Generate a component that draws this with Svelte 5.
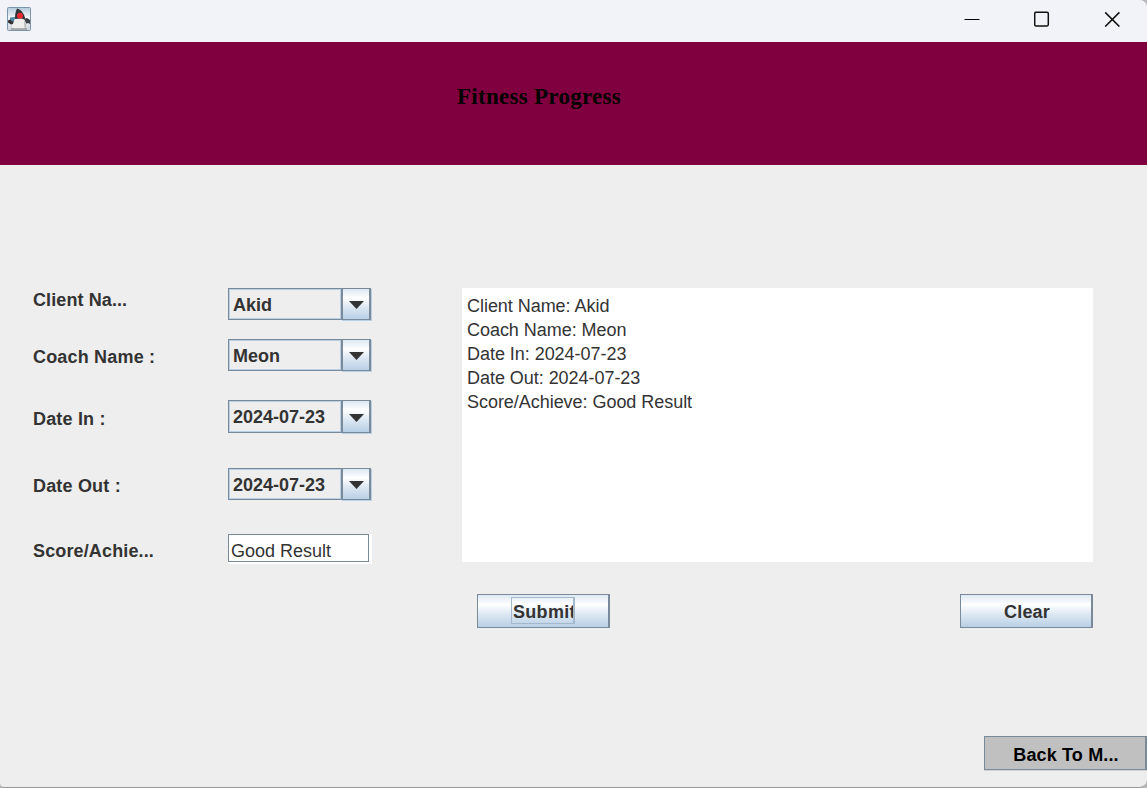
<script>
  const rows = [
    { label: 'Client Na...', value: 'Akid', kind: 'r1' },
    { label: 'Coach Name :', value: 'Meon', kind: 'r2' },
    { label: 'Date In :', value: '2024-07-23', kind: 'r3' },
    { label: 'Date Out :', value: '2024-07-23', kind: 'r4' }
  ];
  const summary = [
    'Client Name: Akid',
    'Coach Name: Meon',
    'Date In: 2024-07-23',
    'Date Out: 2024-07-23',
    'Score/Achieve: Good Result'
  ];
</script>

<div class="window">
  <header class="titlebar">
    <svg class="duke" width="24" height="24" viewBox="0 0 24 24">
      <defs>
        <linearGradient id="tile" x1="0" y1="0" x2="0" y2="1">
          <stop offset="0" stop-color="#b4cbdc" />
          <stop offset=".45" stop-color="#f4f7fa" />
          <stop offset="1" stop-color="#cbd2da" />
        </linearGradient>
      </defs>
      <rect x=".5" y=".5" width="23" height="23" rx="1" fill="url(#tile)" stroke="#7d95aa" />
      <path d="M3 10.500l5-.5v5l-5 1z" fill="#4d87a8" />
      <path d="M1 13.500l2-1 2 2 3-1-1 3-3 1-3-2z" fill="#333" />
      <path d="M17 12l3-1 3 2v4l-2-1-3 1z" fill="#3b4145" />
      <path d="M8.500 10L6.500 15 5 20.500l3 1.500h9l3-2-1.500-5-1.500-4z" fill="#efeeec" />
      <path d="M17 12l2 5 .5 3-2 1.500z" fill="#b9bbbd" />
      <path d="M10 1.500c4 1 7.500 5 8.500 11.500l-4-1.500-6.500.5c0-4 .5-8 2-10.500z" fill="#30353a" />
      <circle cx="13" cy="8.800" r="3" fill="#e8292e" />
      <path d="M4 22h16" stroke="#777" />
    </svg>
    <div class="controls">
      <svg width="16" height="16" viewBox="0 0 16 16"><path d="M.5 8.500h15" stroke="#000" /></svg>
      <svg width="16" height="16" viewBox="0 0 16 16"><rect x=".7" y="1.300" width="13.600" height="13.600" rx="1.300" fill="none" stroke="#111" stroke-width="1.500" /></svg>
      <svg width="16" height="16" viewBox="0 0 16 16"><path d="M1.200 1.400l14.200 14.200M15.400 1.400L1.200 15.600" stroke="#111" stroke-width="1.500" /></svg>
    </div>
  </header>
  <div class="banner"><h1>Fitness Progress</h1></div>
  <main>
    <div class="form">
      {#each rows as row}
        <span class="label {row.kind}">{row.label}</span>
        <div class="combo {row.kind}">
          <span class="value">{row.value}</span>
          <span class="arrow"><svg width="15" height="8" viewBox="0 0 15 8"><path d="M0 0h15L7.5 8z" fill="#333" /></svg></span>
        </div>
      {/each}
      <span class="label r5">Score/Achie...</span>
      <div class="field"><span>Good Result</span></div>
    </div>
    <div class="result">
      <div class="area">
        {#each summary as line}<div><span>{line}</span></div>{/each}
      </div>
      <div class="actions">
        <button class="metal"><span class="focus">Submit</span></button>
        <button class="metal">Clear</button>
      </div>
    </div>
  </main>
  <footer><button class="back">Back To M...</button></footer>
</div>

<style>
  :global(body) { margin: 0; background: #b9b9b9; overflow: hidden; }
  .window {
    box-sizing: border-box; width: 1147px; height: 788px; display: flex; flex-direction: column;
    background: #eee; border-bottom: 1px solid #999; border-radius: 0 8px 8px 4px; overflow: hidden;
    font: bold 18px "Liberation Sans", Arial, sans-serif; color: #333;
  }
  .titlebar {
    height: 42px; flex: none; background: #f1f3f9; display: flex; justify-content: space-between;
    box-sizing: border-box; padding: 7px 27px 0 7px;
  }
  .controls { display: flex; gap: 54px; padding-top: 4px; }
  .controls svg { display: block; }
  .banner { height: 123px; flex: none; background: #80003f; box-sizing: border-box; padding: 40px 0 0 457px; }
  h1 { margin: 0; color: #000; font: bold 23px/30px "Liberation Serif", serif; letter-spacing: .28px; white-space: nowrap; }
  main { display: flex; padding: 123px 0 0 33px; height: 340px; flex: none; }
  .form { width: 429px; display: grid; grid-template-columns: 195px 144px; grid-template-rows: 51px 61px 68px 66px 30px; align-items: start; flex: none; }
  .label { line-height: 20px; white-space: nowrap; letter-spacing: .18px; }
  .label.r1 { padding-top: 2px; letter-spacing: .1px; }
  .label.r2 { padding-top: 8px; }
  .label.r3 { padding-top: 9px; }
  .label.r4 { padding-top: 8px; }
  .label.r5 { padding-top: 7px; letter-spacing: .14px; }
  .combo { display: flex; width: 144px; height: 33px; }
  .value {
    box-sizing: border-box; width: 113px; height: 32px; border: 1px solid #7a8a99; border-right: 0;
    box-shadow: inset 1px 1px #b8cfe5, inset -1px -1px #b8cfe5; padding-left: 4px; line-height: 32px;
  }
  .arrow {
    box-sizing: border-box; width: 30px; height: 32px; border: 1px solid #7a8a99; border-width: 1px 2px;
    background: linear-gradient(#dde8f3, #fff 30%, #dde8f3 60%, #b8cfe5); box-shadow: 1px 1px #b8cfe5;
    display: flex; align-items: center; justify-content: center; padding-top: 2px;
  }
  .combo.r3 .value, .combo.r3 .arrow { height: 33px; }
  .field { box-sizing: border-box; width: 144px; height: 30px; background: #fff; padding: 0 3px 2px 0; }
  .field span {
    display: block; box-sizing: border-box; height: 28px; border: 1px solid #7a8a99; padding-left: 2px;
    font-weight: normal; line-height: 32px;
  }
  .result { width: 631px; }
  .area { height: 274px; box-sizing: border-box; background: #fff; padding: 6px 5px; font-weight: normal; line-height: 24px; letter-spacing: -.04px; }
  .actions { display: flex; justify-content: space-between; padding: 32px 0 0 15px; }
  button { box-sizing: border-box; height: 34px; padding: 0; border: 1px solid #7a8a99; border-right-width: 2px; font: inherit; color: inherit; letter-spacing: .15px; }
  .metal {
    width: 133px; background: linear-gradient(#dde8f3, #fff 30%, #dde8f3 60%, #b8cfe5);
    display: flex; align-items: center; justify-content: center; padding: 2px 0 0 2px;
  }
  .focus {
    box-sizing: border-box; width: 64px; height: 27px; border: 1px solid #a3b8cc; border-right-width: 2px;
    overflow: hidden; line-height: 28px; padding-left: 1px; text-align: left; margin: -4px 2px 0 0; letter-spacing: .3px;
  }
  footer { display: flex; justify-content: flex-end; padding-top: 108px; }
  .back { width: 163px; height: 34px; background: #c0c0c0; color: #000; padding: 4px 0 0 2px; box-shadow: 0 1px #d4d4d4; }
</style>
